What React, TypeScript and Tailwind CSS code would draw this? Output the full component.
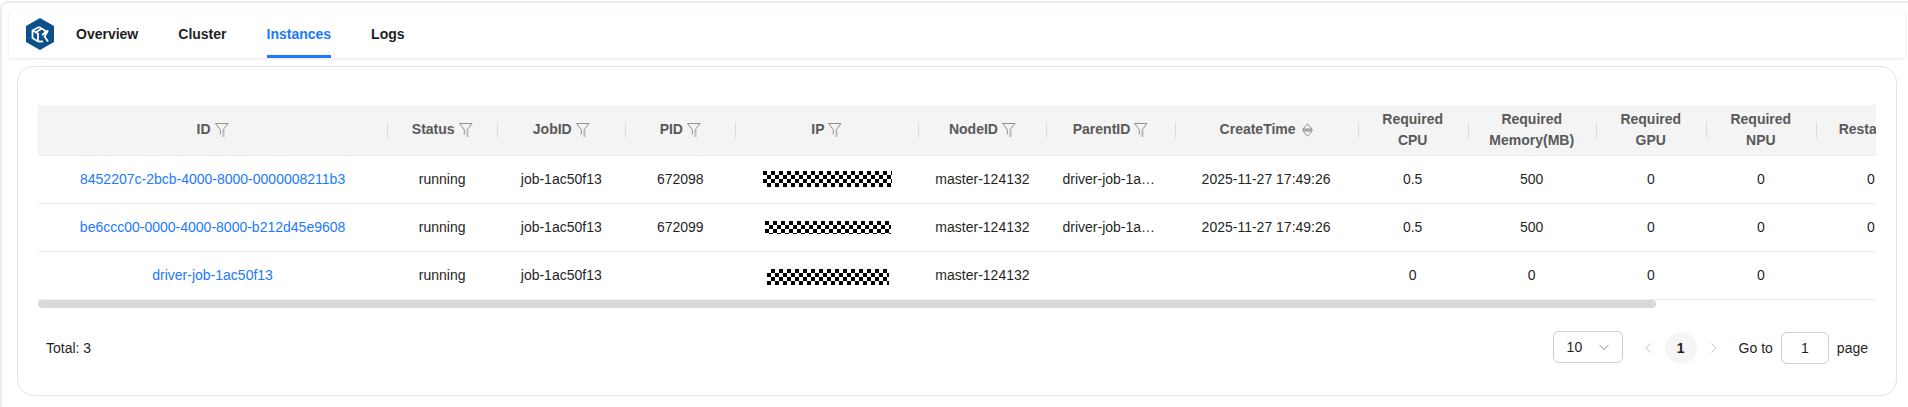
import React from "react";

const Filter = () => (
  <svg width="14" height="16" viewBox="0 0 14 16" fill="none" stroke="#8f8f8f" strokeWidth="1" className="ml-1 shrink-0">
    <path d="M0.5 1.5h12.5l-4.8 6.2v7.3" />
    <path d="M0.5 1.5l4.8 6.2v4.8" />
    <path d="M9 8v7" stroke="#c4c4c4" />
  </svg>
);

const Sort = () => (
  <svg width="11" height="14" viewBox="0 0 11 14" fill="none" stroke="#8f8f8f" strokeWidth="1" className="ml-1.5 shrink-0">
    <path d="M1 6L5.5 0.8 10 6z" />
    <path d="M0 7h11" />
    <path d="M1 8l4.5 5.2L10 8z" />
  </svg>
);

const Logo = () => (
  <svg width="30" height="34" viewBox="0 0 30 34" className="-ml-px">
    <path d="M15 1L29 9v16l-14 8L1 25V9z" fill="#0b4f8c" />
    <g fill="none" stroke="#fff" strokeWidth="1.8">
      <path d="M14 10L7.5 13.5V21l5.5 3.5" />
      <path d="M14 10l6 3.5V17" />
      <path d="M7.5 13.5l5.5 3v8" />
      <path d="M17 11.5L11 15" />
      <path d="M17 18l6-4.5-3.5 6 3.5 5" />
      <path d="M13 24.5h5" />
    </g>
  </svg>
);

const cols = [349, 110, 128, 110, 183, 128, 128, 183, 110, 128, 110, 110, 110];

const headers: { label: React.ReactNode; icon?: "filter" | "sort" }[] = [
  { label: "ID", icon: "filter" },
  { label: "Status", icon: "filter" },
  { label: "JobID", icon: "filter" },
  { label: "PID", icon: "filter" },
  { label: "IP", icon: "filter" },
  { label: "NodeID", icon: "filter" },
  { label: "ParentID", icon: "filter" },
  { label: "CreateTime", icon: "sort" },
  { label: <>Required<br />CPU</> },
  { label: <>Required<br />Memory(MB)</> },
  { label: <>Required<br />GPU</> },
  { label: <>Required<br />NPU</> },
  { label: "Restarted" },
];

const rows = [
  {
    id: "8452207c-2bcb-4000-8000-0000008211b3",
    pid: "672098",
    mask: "w-[129px] h-4",
    parent: "driver-job-1ac50f13",
    time: "2025-11-27 17:49:26",
    cpu: "0.5",
    mem: "500",
    restart: "0",
  },
  {
    id: "be6ccc00-0000-4000-8000-b212d45e9608",
    pid: "672099",
    mask: "w-[126px] h-[13px]",
    parent: "driver-job-1ac50f13",
    time: "2025-11-27 17:49:26",
    cpu: "0.5",
    mem: "500",
    restart: "0",
  },
  {
    id: "driver-job-1ac50f13",
    pid: "",
    mask: "w-[122px] h-4 mt-1 bg-[position:4px_0]",
    parent: "",
    time: "",
    cpu: "0",
    mem: "0",
    restart: "",
  },
];

export default function App() {
  return (
    <div className="w-[1908px] h-[407px] overflow-hidden bg-white font-['Liberation_Sans',Arial,sans-serif] text-sm text-[#1f1f1f]">
      <div className="h-[407px] mt-px border-t-2 border-l-2 border-[#ededed] rounded-tl-lg pt-[7px] pl-[7px]">
        <nav className="w-[1896px] h-12 flex items-center bg-white shadow-[0_1px_3px_rgba(0,0,0,0.1)] pl-[17px] font-bold">
          <Logo />
          <div className="flex gap-10 ml-[21px] h-full">
            <a className="flex items-center">Overview</a>
            <a className="flex items-center">Cluster</a>
            <a className="flex items-center text-[#1b79ff] border-b-[3px] border-[#1b79ff] pt-[3px]">Instances</a>
            <a className="flex items-center">Logs</a>
          </div>
        </nav>

        <section className="w-[1880px] h-[330px] mt-2 ml-2 border border-[#e3e3e3] rounded-2xl pt-[38px] pl-5 pr-5">
          <div className="overflow-hidden">
            <table className="table-fixed w-[1888px] border-collapse text-center">
              <colgroup>
                {cols.map((w, i) => (
                  <col key={i} style={{ width: w }} />
                ))}
              </colgroup>
              <thead>
                <tr className="h-[50px] bg-[#f4f4f4] text-[#595959] leading-[21px]">
                  {headers.map((h, i) => (
                    <th key={i} className="relative font-bold p-0 border-b border-[#ececec]">
                      <div className="flex items-center justify-center">
                        <span>{h.label}</span>
                        {h.icon === "filter" && <Filter />}
                        {h.icon === "sort" && <Sort />}
                      </div>
                      {i < headers.length - 1 && (
                        <span className="absolute -right-px top-[17px] w-px h-4 bg-[#dcdcdc]" />
                      )}
                    </th>
                  ))}
                </tr>
              </thead>
              <tbody>
                {rows.map((r) => (
                  <tr key={r.id} className="h-12 border-b border-[#ececec]">
                    <td className="text-[#1b79ff] p-0">{r.id}</td>
                    <td className="p-0">running</td>
                    <td className="p-0">job-1ac50f13</td>
                    <td className="p-0">{r.pid}</td>
                    <td className="p-0 pl-0.5">
                      <div
                        className={`${r.mask} mx-auto bg-[repeating-conic-gradient(#fff_0_25%,#000_0_50%)] bg-[length:8px_8px]`}
                      />
                    </td>
                    <td className="p-0">master-124132</td>
                    <td className="py-0 px-4 truncate">{r.parent}</td>
                    <td className="p-0">{r.time}</td>
                    <td className="p-0">{r.cpu}</td>
                    <td className="p-0">{r.mem}</td>
                    <td className="p-0">0</td>
                    <td className="p-0">0</td>
                    <td className="p-0">{r.restart}</td>
                  </tr>
                ))}
              </tbody>
            </table>
          </div>
          <div className="w-[1618px] h-2 bg-[#d9d9d9] rounded" />

          <div className="flex items-center justify-between mt-6 pl-2 pr-2 h-8">
            <span>Total: 3</span>
            <div className="flex items-center">
              <div className="w-[70px] h-8 -mt-0.5 border border-[#cfcfcf] rounded-md flex items-center justify-between pl-[13px] pr-3">
                <span>10</span>
                <svg width="12" height="12" viewBox="0 0 12 12" fill="none" stroke="#8c8c8c" strokeWidth="1">
                  <path d="M1.5 4l4.5 4.5L10.5 4" />
                </svg>
              </div>
              <svg width="8" height="12" viewBox="0 0 8 12" fill="none" stroke="#c4c4c4" strokeWidth="1" className="ml-[21px]">
                <path d="M6.5 1.5L2 6l4.5 4.5" />
              </svg>
              <div className="w-8 h-8 ml-[13px] rounded-full bg-[#f5f5f5] flex items-center justify-center font-bold">1</div>
              <svg width="8" height="12" viewBox="0 0 8 12" fill="none" stroke="#c4c4c4" strokeWidth="1" className="ml-[13px]">
                <path d="M1.5 1.5L6 6l-4.5 4.5" />
              </svg>
              <span className="ml-[21px]">Go to</span>
              <div className="w-12 h-8 ml-2 border border-[#cfcfcf] rounded-md flex items-center justify-center">1</div>
              <span className="ml-2">page</span>
            </div>
          </div>
        </section>
      </div>
    </div>
  );
}
